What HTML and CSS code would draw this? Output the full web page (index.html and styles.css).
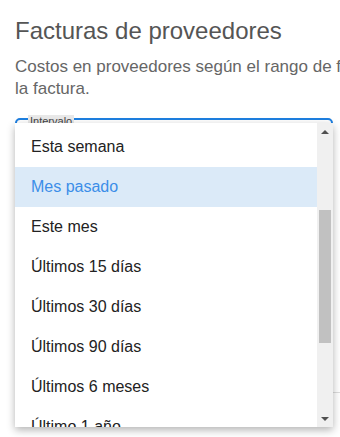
FILE: index.html
```html
<!DOCTYPE html>
<html>

<head>
    <link rel="stylesheet" href="styles.css">
</head>

<body>
    <div class="page">
        <h1 class="title">Facturas de proveedores</h1>
        <p class="subtitle">Costos en proveedores según el rango de fecha de la factura.</p>

        <div class="field">
            <span class="legend">Intervalo</span>
        </div>
        <div class="rule"></div>

        <!-- menu desplegable abierto -->
        <div class="menu">
            <ul class="options">
                <li>Esta semana</li>
                <li class="selected">Mes pasado</li>
                <li>Este mes</li>
                <li>Últimos 15 días</li>
                <li>Últimos 30 días</li>
                <li>Últimos 90 días</li>
                <li>Últimos 6 meses</li>
                <li>Último 1 año</li>
            </ul>
            <div class="scrollbar">
                <span class="arrow up"></span>
                <div class="track">
                    <div class="thumb"></div>
                </div>
                <span class="arrow down"></span>
            </div>
        </div>
    </div>
</body>

</html>
```

FILE: styles.css
```css
body {
    margin: 0;
    font-family: "Liberation Sans", Arial, sans-serif;
    background-color: white;
}

.page {
    position: relative;
    box-sizing: border-box;
    width: 100%;
    height: 437px;
    padding: 16px 15px 0 15px;
    overflow: hidden;
}

.title {
    margin: 0;
    font-size: 24px;
    font-weight: normal;
    color: #555555;
    line-height: 30px;
    white-space: nowrap;
}

.subtitle {
    width: 400px;
    margin: 10px 0 0 0;
    font-size: 17px;
    line-height: 22px;
    color: #666666;
}

.field {
    position: relative;
    width: 314px;
    height: 44px;
    margin-top: 18px;
    border: 2px solid #1e7fe0;
    border-radius: 5px;
}

.legend {
    position: absolute;
    top: -5px;
    left: 11px;
    padding: 0 2px;
    font-size: 11px;
    line-height: 12px;
    color: #444444;
    background-color: #e8e8e8;
}

.rule {
    width: 400px;
    margin-top: 226px;
    border-top: 1px solid #dddddd;
}

.menu {
    position: absolute;
    left: 15px;
    top: 123px;
    width: 318px;
    height: 304px;
    display: flex;
    background-color: white;
    box-shadow: 0 3px 8px rgba(0, 0, 0, 0.3);
    overflow: hidden;
}

.options {
    flex: 1;
    margin: 0;
    padding: 4px 0 0 0;
    list-style: none;
}

.options li {
    height: 40px;
    line-height: 40px;
    padding-left: 16px;
    font-size: 16px;
    color: #222222;
}

.options li.selected {
    background-color: #dbeaf8;
    color: #3b8ee8;
}

.scrollbar {
    width: 16px;
    display: flex;
    flex-direction: column;
    background-color: #f0f0f0;
}

.arrow {
    height: 17px;
    display: flex;
    justify-content: center;
    align-items: center;
}

.arrow::before {
    content: "";
    border-left: 4px solid transparent;
    border-right: 4px solid transparent;
}

.arrow.up::before {
    border-bottom: 4px solid #505050;
}

.arrow.down::before {
    border-top: 4px solid #505050;
}

.track {
    flex: 1;
    padding-top: 70px;
}

.thumb {
    width: 12px;
    height: 133px;
    margin: 0 auto;
    background-color: #c1c1c1;
}
```
